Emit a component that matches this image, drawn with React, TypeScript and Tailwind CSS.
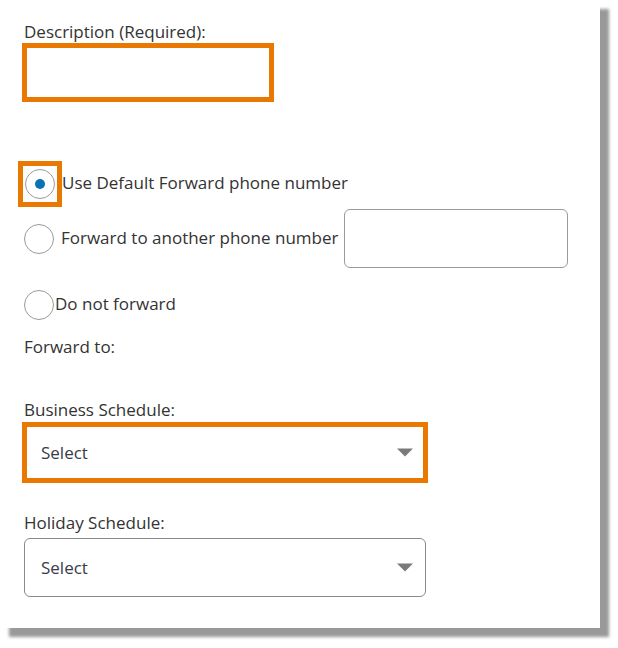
const font = { fontFamily: '"Open Sans", "Noto Sans", sans-serif' };

function Radio({ checked }: { checked?: boolean }) {
  return (
    <span className="flex h-[30px] w-[30px] shrink-0 items-center justify-center rounded-full border-[1.5px] border-[#9a9a9a] bg-white">
      {checked && <span className="h-[10px] w-[10px] rounded-full bg-[#0a73b7]" />}
    </span>
  );
}

function Caret() {
  return (
    <svg width="16" height="9" viewBox="0 0 16 9" className="shrink-0">
      <path d="M0 0.5 H16 L8 8.5 Z" fill="#7a7a7a" />
    </svg>
  );
}

export default function App() {
  return (
    <div className="h-[648px] w-[618px] bg-white" style={font}>
      <div className="flex h-[628px] w-[600px] flex-col bg-white pl-[24px] text-[#333] shadow-[9px_9px_3px_#999]">
        <div className="mt-[22px] h-[20px] text-[17px] leading-[20px]">Description (Required):</div>
        <div className="ml-[-2px] mt-[1px] h-[59px] w-[252px] border-[5px] border-[#e87800] bg-white" />

        <div className="ml-[-6px] mt-[59px] flex h-[46px] items-center">
          <div className="flex h-[46px] w-[44px] items-center justify-center border-[5px] border-[#e87800]">
            <Radio checked />
          </div>
          <span className="mt-[-2px] text-[17px] leading-[20px]">Use Default Forward phone number</span>
        </div>

        <div className="mt-[2px] flex h-[59px] items-center">
          <Radio />
          <span className="ml-[7px] mt-[-2px] text-[17px] leading-[20px]">Forward to another phone number</span>
          <div className="ml-[6px] h-[59px] w-[224px] rounded-[6px] border-[1.5px] border-[#9a9a9a]" />
        </div>

        <div className="mt-[22px] flex h-[30px] items-center">
          <Radio />
          <span className="ml-[1px] mt-[-2px] text-[17px] leading-[20px]">Do not forward</span>
        </div>

        <div className="mt-[17px] h-[20px] text-[17px] leading-[20px]">Forward to:</div>

        <div className="mt-[43px] h-[20px] text-[17px] leading-[20px]">Business Schedule:</div>
        <div className="ml-[-2px] mt-[2px] flex h-[61px] w-[406px] items-center justify-between border-[5px] border-[#e87800] pl-[14px] pr-[10px]">
          <span className="text-[17px] text-[#3a3a4a]">Select</span>
          <Caret />
        </div>

        <div className="mt-[30px] h-[20px] text-[17px] leading-[20px]">Holiday Schedule:</div>
        <div className="mt-[5px] flex h-[59px] w-[402px] items-center justify-between rounded-[6px] border-[1.5px] border-[#8a8a8a] pl-[16px] pr-[12px]">
          <span className="text-[17px] text-[#3a3a4a]">Select</span>
          <Caret />
        </div>
      </div>
    </div>
  );
}
